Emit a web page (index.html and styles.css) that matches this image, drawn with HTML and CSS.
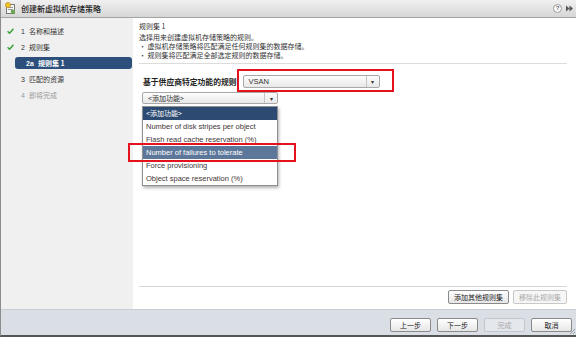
FILE: index.html
```html
<!DOCTYPE html>
<html lang="zh-CN">
<head>
  <meta charset="UTF-8">
  <title>创建新虚拟机存储策略</title>
  <link rel="stylesheet" href="styles.css">
</head>
<body>
  <div class="window">
    <div class="titlebar">
      <svg class="app-icon" width="11" height="12" viewBox="0 0 11 12">
        <rect x="1.5" y="2.5" width="8" height="9" fill="#f4f4f4" stroke="#7a7a7a"/>
        <rect x="3" y="5" width="5" height="1" fill="#999"/>
        <rect x="3" y="7" width="5" height="1" fill="#999"/>
        <circle cx="3" cy="3" r="2.6" fill="#f2c230" stroke="#b08a10" stroke-width="0.6"/>
        <rect x="6" y="8" width="4" height="3.5" fill="#6aa84f"/>
      </svg>
      <span class="title">创建新虚拟机存储策略</span>
      <span class="title-tools">
        <span class="help">?</span>
        <svg width="7" height="7" viewBox="0 0 7 7"><path d="M0 0.5 L3.5 3.5 L0 6.5Z M3.5 0.5 L7 3.5 L3.5 6.5Z" fill="#555"/></svg>
      </span>
    </div>

    <div class="body">
      <aside class="steps">
        <div class="step">
          <span class="check"><svg width="7" height="6" viewBox="0 0 7 6"><path d="M0.6 3.2 L2.6 5.2 L6.4 0.8" fill="none" stroke="#3aa23a" stroke-width="1.5"/></svg></span>
          <span class="num">1</span>名称和描述
        </div>
        <div class="step">
          <span class="check"><svg width="7" height="6" viewBox="0 0 7 6"><path d="M0.6 3.2 L2.6 5.2 L6.4 0.8" fill="none" stroke="#3aa23a" stroke-width="1.5"/></svg></span>
          <span class="num">2</span>规则集
        </div>
        <div class="step sub active"><span class="num">2a</span>规则集 1</div>
        <div class="step"><span class="check"></span><span class="num">3</span>匹配的资源</div>
        <div class="step muted"><span class="check"></span><span class="num">4</span>即将完成</div>
      </aside>

      <main class="content">
        <div class="intro">
          <div class="intro-title">规则集 1</div>
          <div>选择用来创建虚拟机存储策略的规则。</div>
          <div>• 虚拟机存储策略将匹配满足任何规则集的数据存储。</div>
          <div>• 规则集将匹配满足全部选定规则的数据存储。</div>
        </div>

        <div class="rules">
          <div class="rule-row">
            <span class="rule-label">基于供应商特定功能的规则</span>
            <span class="marked">
              <span class="select vsan"><span class="select-value">VSAN</span><span class="select-arrow">▾</span></span>
            </span>
          </div>
          <div class="add-wrap">
            <span class="select add"><span class="select-value">&lt;添加功能&gt;</span><span class="select-arrow">▾</span></span>
            <ul class="dropdown">
              <li class="current">&lt;添加功能&gt;</li>
              <li>Number of disk stripes per object</li>
              <li>Flash read cache reservation (%)</li>
              <li class="hover">Number of failures to tolerate</li>
              <li>Force provisioning</li>
              <li>Object space reservation (%)</li>
            </ul>
          </div>
        </div>

        <div class="rule-actions">
          <button class="btn">添加其他规则集</button>
          <button class="btn" disabled>移除此规则集</button>
        </div>
      </main>
    </div>

    <div class="footer">
      <button class="btn nav">上一步</button>
      <button class="btn nav">下一步</button>
      <button class="btn nav" disabled>完成</button>
      <button class="btn nav">取消</button>
      <span class="grip"></span>
    </div>
  </div>
</body>
</html>
```

FILE: styles.css
```css
* {
  box-sizing: border-box;
}
html, body {
  margin: 0;
  height: 100%;
}
body {
  font-family: "Noto Sans CJK SC", "Liberation Sans", sans-serif;
  font-size: 7px;
  color: #333;
  background: #fff;
}
.window {
  height: 337px;
  display: flex;
  flex-direction: column;
  border-left: 1px solid #8c8c8c;
  border-bottom: 2px solid #555;
}
.titlebar {
  height: 18px;
  flex: none;
  display: flex;
  align-items: center;
  padding: 0 3px 1px 4px;
  background: linear-gradient(#f0f0f0, #d6d6d6);
  border-bottom: 1px solid #a4a4a4;
}
.app-icon {
  margin-right: 5px;
}
.title {
  font-size: 8px;
  font-weight: 500;
  color: #1e1e1e;
}
.title-tools {
  margin-left: auto;
  display: flex;
  align-items: center;
  gap: 4px;
}
.help {
  width: 9px;
  height: 9px;
  border-radius: 50%;
  border: 1px solid #9a9a9a;
  background: #fafafa;
  font-family: "Liberation Sans", sans-serif;
  font-size: 6px;
  font-weight: bold;
  color: #666;
  display: flex;
  align-items: center;
  justify-content: center;
}
.body {
  flex: 1;
  display: flex;
  min-height: 0;
}
.steps {
  width: 132px;
  flex: none;
  background: #f0f0f0;
  padding: 7px 1px 0 0;
  display: flex;
  flex-direction: column;
  gap: 4px;
}
.step {
  height: 12px;
  display: flex;
  align-items: center;
  color: #333;
}
.check {
  width: 20px;
  padding-left: 6px;
  display: flex;
  align-items: center;
}
.num {
  width: 8px;
  font-family: "Liberation Sans", sans-serif;
}
.step.sub {
  margin-left: 14px;
  padding-left: 11px;
  color: #fff;
  font-weight: bold;
  background: #2c4f7c;
  border-radius: 3px;
}
.step.sub .num {
  width: 12px;
}
.step.muted {
  color: #999;
}
.content {
  flex: 1;
  position: relative;
  display: flex;
  flex-direction: column;
  padding: 0 9px 5px 5px;
  margin-left: 1px;
}
.intro {
  padding: 4px 0 3px;
  line-height: 9px;
  border-bottom: 1px solid #dcdcdc;
}
.intro-title {
  margin-bottom: 2px;
}
.rules {
  flex: 1;
  padding: 11px 0 0 4px;
}
.rule-row {
  display: flex;
  align-items: center;
  gap: 6px;
}
.rule-label {
  font-size: 7.8px;
  font-weight: bold;
  color: #222;
}
.marked {
  position: relative;
}
.marked::after {
  content: "";
  position: absolute;
  left: -6px;
  right: -14px;
  top: -6px;
  bottom: -4px;
  border: 2px solid #e4121d;
}
.select {
  display: flex;
  align-items: center;
  height: 13px;
  border: 1px solid #a8a8a8;
  border-radius: 2px;
  background: linear-gradient(#fdfdfd, #e8e8e8);
  font-family: "Liberation Sans", "Noto Sans CJK SC", sans-serif;
  font-size: 7.5px;
}
.select-value {
  flex: 1;
  padding-left: 5px;
}
.select-arrow {
  width: 13px;
  height: 100%;
  border-left: 1px solid #c4c4c4;
  font-size: 6px;
  color: #333;
  display: flex;
  align-items: center;
  justify-content: center;
}
.vsan {
  width: 137px;
}
.add-wrap {
  position: relative;
  width: 136px;
  margin-top: 4px;
  margin-left: -1px;
}
.add {
  height: 12px;
}
.add .select-value {
  font-family: "Noto Sans CJK SC", sans-serif;
  font-size: 7px;
}
.dropdown {
  position: absolute;
  top: 14px;
  left: 0;
  width: 136px;
  margin: 0;
  padding: 0;
  list-style: none;
  background: #fff;
  border: 1px solid #8f8f8f;
  box-shadow: 1px 2px 3px rgba(0, 0, 0, 0.3);
  font-family: "Liberation Sans", "Noto Sans CJK SC", sans-serif;
  font-size: 7.5px;
}
.dropdown li {
  height: 13px;
  line-height: 13px;
  padding-left: 3px;
  color: #443636;
  white-space: nowrap;
}
.dropdown li.current {
  background: #2c4a72;
  color: #fff;
  font-family: "Noto Sans CJK SC", sans-serif;
  font-size: 7px;
}
.dropdown li.hover {
  position: relative;
  background: #5c7799;
  color: #fff;
}
.dropdown li.hover::after {
  content: "";
  position: absolute;
  left: -15px;
  right: -19px;
  top: -3px;
  bottom: -3px;
  border: 2px solid #e4121d;
}
.rule-actions {
  display: flex;
  justify-content: flex-end;
  gap: 4px;
  padding-top: 3px;
  border-top: 1px solid #d6d6d6;
}
.btn {
  height: 14px;
  padding: 0 5px;
  border: 1px solid #8a8a8a;
  border-radius: 2px;
  background: linear-gradient(#ffffff, #e6e6e6);
  font-family: "Noto Sans CJK SC", sans-serif;
  font-size: 7px;
  color: #222;
  line-height: 1;
}
.btn:disabled {
  border-color: #c8c8c8;
  color: #aaa;
  background: #f6f6f6;
}
.footer {
  position: relative;
  height: 26px;
  flex: none;
  display: flex;
  justify-content: flex-end;
  align-items: flex-start;
  gap: 6px;
  padding: 8px 4px 0 0;
  background: #dadfe6;
  border-top: 1px solid #c9ced6;
}
.btn.nav {
  width: 41px;
}
.btn.nav:disabled {
  background: #e4e7ec;
  border-color: #c3c7cd;
}
.grip {
  position: absolute;
  right: 1px;
  bottom: 1px;
  width: 5px;
  height: 5px;
  background: linear-gradient(135deg, transparent 50%, #9aa0a8 50%, #9aa0a8 60%, transparent 60%, transparent 75%, #9aa0a8 75%, #9aa0a8 85%, transparent 85%);
}
```
